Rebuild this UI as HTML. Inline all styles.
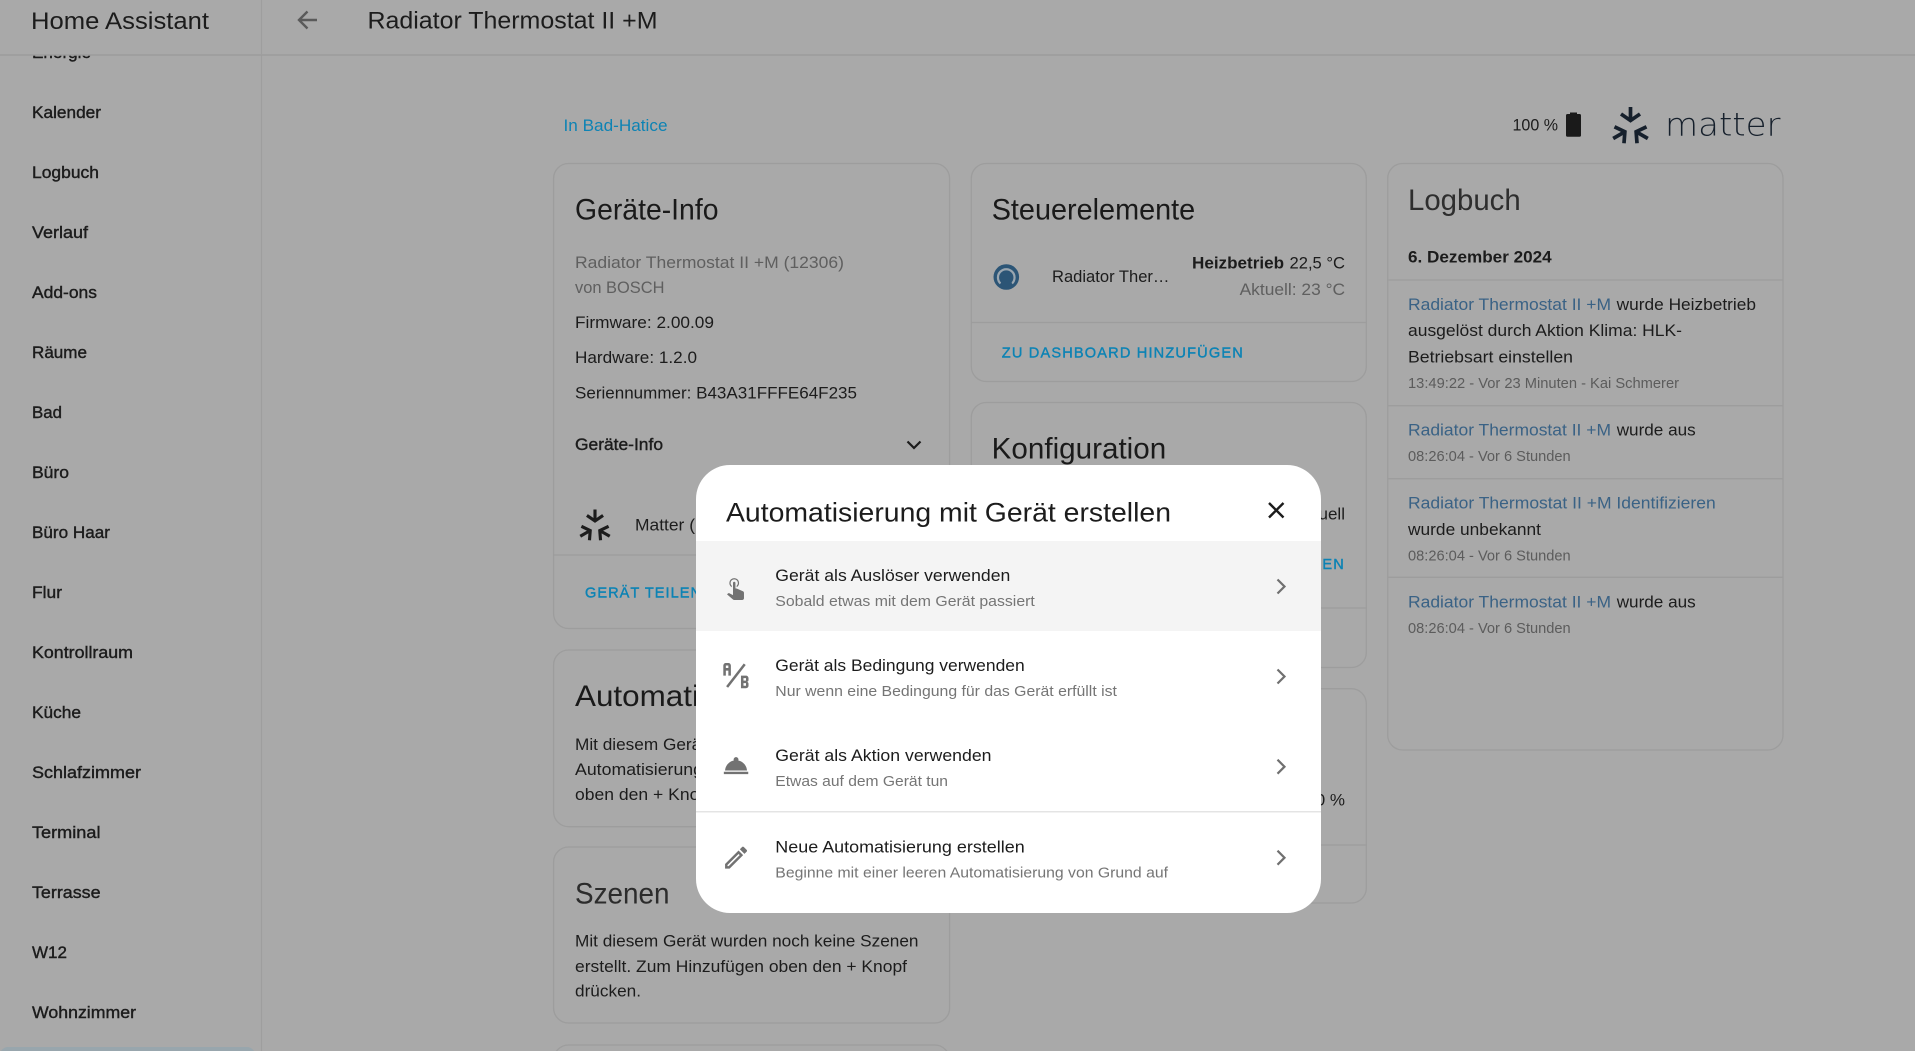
<!DOCTYPE html>
<html lang="de">
<head>
<meta charset="utf-8">
<title>Radiator Thermostat II +M</title>
<style>
html,body{margin:0;padding:0;width:1915px;height:1051px;overflow:hidden;background:#a9a9a9}
svg{display:block;position:absolute;left:0;top:0}
text{font-family:"Liberation Sans",sans-serif;font-size:17px;fill:#1c1c1c}
.nav{stroke:#1c1c1c;stroke-width:.4px}
.h{font-size:29.3px;fill:#1a1a1a}
.g{fill:#5f5f5f}
.l{fill:#3a6285}
.t{font-size:14.7px;fill:#5c5c5c}
.b{fill:#0d83b4;font-size:14.6px;stroke:#0d83b4;stroke-width:.4px}
.s{font-size:14.7px;fill:#757575}
.card{fill:#a9a9a9;stroke:#9d9d9d;stroke-width:1.3}
.div{stroke:#9d9d9d;stroke-width:1.3}
</style>
</head>
<body>
<svg width="1915" height="1051" viewBox="0 0 1915 1051" xmlns="http://www.w3.org/2000/svg">
<defs>
<g id="mt" fill="none" stroke-width="3.700">
<g id="arm"><path d="M0-20V-8"/><path d="M-9.500-13L0-6.500L9.500-13"/></g>
<use href="#arm" transform="translate(0 1.500) rotate(120)"/>
<use href="#arm" transform="translate(0 1.500) rotate(240)"/>
</g>
</defs>
<rect width="1915" height="1051" fill="#a9a9a9"/>

<!-- Sidebar -->
<text class="nav" x="32" y="58" textLength="59" lengthAdjust="spacingAndGlyphs">Energie</text>
<text class="nav" x="32" y="118" textLength="69" lengthAdjust="spacingAndGlyphs">Kalender</text>
<text class="nav" x="32" y="178" textLength="67" lengthAdjust="spacingAndGlyphs">Logbuch</text>
<text class="nav" x="32" y="238" textLength="56" lengthAdjust="spacingAndGlyphs">Verlauf</text>
<text class="nav" x="32" y="298" textLength="65" lengthAdjust="spacingAndGlyphs">Add-ons</text>
<text class="nav" x="32" y="358" textLength="55" lengthAdjust="spacingAndGlyphs">Räume</text>
<text class="nav" x="32" y="418" textLength="30" lengthAdjust="spacingAndGlyphs">Bad</text>
<text class="nav" x="32" y="478" textLength="37" lengthAdjust="spacingAndGlyphs">Büro</text>
<text class="nav" x="32" y="538" textLength="78" lengthAdjust="spacingAndGlyphs">Büro Haar</text>
<text class="nav" x="32" y="598" textLength="30" lengthAdjust="spacingAndGlyphs">Flur</text>
<text class="nav" x="32" y="658" textLength="101" lengthAdjust="spacingAndGlyphs">Kontrollraum</text>
<text class="nav" x="32" y="718" textLength="49" lengthAdjust="spacingAndGlyphs">Küche</text>
<text class="nav" x="32" y="778" textLength="109" lengthAdjust="spacingAndGlyphs">Schlafzimmer</text>
<text class="nav" x="32" y="838" textLength="68.500" lengthAdjust="spacingAndGlyphs">Terminal</text>
<text class="nav" x="32" y="898" textLength="68.500" lengthAdjust="spacingAndGlyphs">Terrasse</text>
<text class="nav" x="32" y="958" textLength="35" lengthAdjust="spacingAndGlyphs">W12</text>
<text class="nav" x="32" y="1018" textLength="104" lengthAdjust="spacingAndGlyphs">Wohnzimmer</text>
<rect x="0" y="1047" width="255" height="20" rx="8" fill="#98a6ad"/>
<line x1="261.500" y1="0" x2="261.500" y2="1051" stroke="#9e9e9e" stroke-width="1.2"/>

<!-- Header -->
<rect width="1915" height="55" fill="#a9a9a9"/>
<line x1="0" y1="55" x2="1915" y2="55" stroke="#9c9c9c" stroke-width="1.4"/>
<line x1="261.500" y1="0" x2="261.500" y2="55" stroke="#9e9e9e" stroke-width="1.2"/>
<text x="31" y="29" style="font-size:24.4px" textLength="178" lengthAdjust="spacingAndGlyphs">Home Assistant</text>
<path d="M317 20H299M307.500 11.500L299 20L307.500 28.500" fill="none" stroke="#5a5a5a" stroke-width="2.400"/>
<text x="367.500" y="28.500" style="font-size:24.4px" textLength="290" lengthAdjust="spacingAndGlyphs">Radiator Thermostat II +M</text>

<!-- Top row -->
<text x="563.500" y="131" style="fill:#0d83b4" textLength="104" lengthAdjust="spacingAndGlyphs">In Bad-Hatice</text>
<text x="1512.500" y="130.700" textLength="45.500" lengthAdjust="spacingAndGlyphs">100 %</text>
<path d="M1570 114V112.500H1577V114H1579.500A1.500 1.500 0 0 1 1581 115.500V135.200A1.500 1.500 0 0 1 1579.500 136.700H1567.500A1.500 1.500 0 0 1 1566 135.200V115.500A1.500 1.500 0 0 1 1567.500 114Z" fill="#1a1a1a"/>
<use href="#mt" transform="translate(1630.500 127)" stroke="#16202c"/>
<text x="1665" y="135.700" style="font-family:'DejaVu Sans',sans-serif;font-weight:200;font-size:32px;fill:#16202c" textLength="115.500" lengthAdjust="spacingAndGlyphs">matter</text>

<!-- Column 1 -->
<rect class="card" x="553.600" y="163.500" width="396" height="465" rx="15"/>
<text class="h" x="575" y="219.300" textLength="143.500" lengthAdjust="spacingAndGlyphs">Geräte-Info</text>
<text class="g" x="575" y="268" textLength="269" lengthAdjust="spacingAndGlyphs">Radiator Thermostat II +M (12306)</text>
<text class="g" x="575" y="293" textLength="89.500" lengthAdjust="spacingAndGlyphs">von BOSCH</text>
<text x="575" y="328" textLength="139" lengthAdjust="spacingAndGlyphs">Firmware: 2.00.09</text>
<text x="575" y="363" textLength="122" lengthAdjust="spacingAndGlyphs">Hardware: 1.2.0</text>
<text x="575" y="398.500" textLength="282" lengthAdjust="spacingAndGlyphs">Seriennummer: B43A31FFFE64F235</text>
<text class="nav" x="575" y="450" textLength="88" lengthAdjust="spacingAndGlyphs">Geräte-Info</text>
<path d="M907.500 441.500L914 448L920.500 441.500" fill="none" stroke="#1c1c1c" stroke-width="2.200"/>
<use href="#mt" transform="translate(595 526.500) scale(.85)" stroke="#1c1c1c"/>
<text x="635" y="530.700" textLength="60" lengthAdjust="spacingAndGlyphs">Matter (</text>
<line class="div" x1="553.600" y1="555" x2="949.600" y2="555"/>
<text class="b" x="585" y="597.700" textLength="116" lengthAdjust="spacing">GERÄT TEILEN</text>

<rect class="card" x="553.600" y="650" width="396" height="176.700" rx="15"/>
<text class="h" x="575" y="706" textLength="124" lengthAdjust="spacingAndGlyphs">Automati</text>
<text x="575" y="750" textLength="131" lengthAdjust="spacingAndGlyphs">Mit diesem Gerät</text>
<text x="575" y="775" textLength="128" lengthAdjust="spacingAndGlyphs">Automatisierung</text>
<text x="575" y="800" textLength="139" lengthAdjust="spacingAndGlyphs">oben den + Knopf</text>

<rect class="card" x="553.600" y="847" width="396" height="176" rx="15"/>
<text class="h" x="575" y="903.500" style="fill:#2c2c2c" textLength="94.500" lengthAdjust="spacingAndGlyphs">Szenen</text>
<text x="575" y="946.700" textLength="343.500" lengthAdjust="spacingAndGlyphs">Mit diesem Gerät wurden noch keine Szenen</text>
<text x="575" y="971.800" textLength="332" lengthAdjust="spacingAndGlyphs">erstellt. Zum Hinzufügen oben den + Knopf</text>
<text x="575" y="996.700" textLength="66" lengthAdjust="spacingAndGlyphs">drücken.</text>
<rect class="card" x="553.600" y="1045" width="396" height="40" rx="15"/>

<!-- Column 2 -->
<rect class="card" x="971.300" y="163.500" width="395" height="218" rx="15"/>
<text class="h" x="991.700" y="219.300" textLength="203.500" lengthAdjust="spacingAndGlyphs">Steuerelemente</text>
<circle cx="1006.300" cy="277" r="12.800" fill="#2c5576"/>
<path d="M1000.500 283.500A8.300 8.300 0 1 1 1012 283.500" fill="none" stroke="#9aa6b0" stroke-width="2.200"/>
<path d="M1001 287.500C1000.800 280 1002.500 276 1006 274.500L1008.500 271L1010 275C1011.500 277 1012 281 1011.500 287.500Z" fill="#2c5576"/>
<text x="1052" y="282" textLength="117.500" lengthAdjust="spacingAndGlyphs">Radiator Ther…</text>
<text x="1192" y="268.700" font-weight="bold" textLength="92" lengthAdjust="spacingAndGlyphs">Heizbetrieb</text>
<text x="1289.500" y="268.700" textLength="55.500" lengthAdjust="spacingAndGlyphs">22,5 °C</text>
<text class="g" x="1239.600" y="295" textLength="105.500" lengthAdjust="spacingAndGlyphs">Aktuell: 23 °C</text>
<line class="div" x1="971.300" y1="322.500" x2="1366.300" y2="322.500"/>
<text class="b" x="1001.800" y="357.700" textLength="241" lengthAdjust="spacing">ZU DASHBOARD HINZUFÜGEN</text>

<rect class="card" x="971.300" y="402.500" width="395" height="265" rx="15"/>
<text class="h" x="991.700" y="458.300" textLength="174.500" lengthAdjust="spacingAndGlyphs">Konfiguration</text>
<text x="1345" y="519.300" text-anchor="end">manuell</text>
<text class="b" x="1345" y="569" text-anchor="end" style="letter-spacing:1.2px">KEN</text>
<line class="div" x1="971.300" y1="608" x2="1366.300" y2="608"/>

<rect class="card" x="971.300" y="688.700" width="395" height="214.300" rx="15"/>
<text x="1345" y="805.700" text-anchor="end">100 %</text>
<line class="div" x1="971.300" y1="845" x2="1366.300" y2="845"/>

<!-- Logbook -->
<rect class="card" x="1387.700" y="163.500" width="395.300" height="586.500" rx="15"/>
<text class="h" x="1408" y="210" style="fill:#2e2e2e" textLength="112.700" lengthAdjust="spacingAndGlyphs">Logbuch</text>
<text x="1408" y="262.700" font-weight="bold" textLength="143.700" lengthAdjust="spacingAndGlyphs">6. Dezember 2024</text>
<line class="div" x1="1387.700" y1="280" x2="1783" y2="280"/>
<text class="l" x="1408" y="310" textLength="203" lengthAdjust="spacingAndGlyphs">Radiator Thermostat II +M</text>
<text x="1616.700" y="310" textLength="139.300" lengthAdjust="spacingAndGlyphs">wurde Heizbetrieb</text>
<text x="1408" y="336" textLength="274" lengthAdjust="spacingAndGlyphs">ausgelöst durch Aktion Klima: HLK-</text>
<text x="1408" y="362.500" textLength="165" lengthAdjust="spacingAndGlyphs">Betriebsart einstellen</text>
<text class="t" x="1408" y="388" textLength="271" lengthAdjust="spacingAndGlyphs">13:49:22 - Vor 23 Minuten - Kai Schmerer</text>
<line class="div" x1="1387.700" y1="405.700" x2="1783" y2="405.700"/>
<text class="l" x="1408" y="435.700" textLength="203" lengthAdjust="spacingAndGlyphs">Radiator Thermostat II +M</text>
<text x="1616.700" y="435.700" textLength="79" lengthAdjust="spacingAndGlyphs">wurde aus</text>
<text class="t" x="1408" y="461" textLength="162.700" lengthAdjust="spacingAndGlyphs">08:26:04 - Vor 6 Stunden</text>
<line class="div" x1="1387.700" y1="478.700" x2="1783" y2="478.700"/>
<text class="l" x="1408" y="508.500" textLength="307.700" lengthAdjust="spacingAndGlyphs">Radiator Thermostat II +M Identifizieren</text>
<text x="1408" y="535" textLength="133" lengthAdjust="spacingAndGlyphs">wurde unbekannt</text>
<text class="t" x="1408" y="560.700" textLength="162.700" lengthAdjust="spacingAndGlyphs">08:26:04 - Vor 6 Stunden</text>
<line class="div" x1="1387.700" y1="577.300" x2="1783" y2="577.300"/>
<text class="l" x="1408" y="607.300" textLength="203" lengthAdjust="spacingAndGlyphs">Radiator Thermostat II +M</text>
<text x="1616.700" y="607.300" textLength="79" lengthAdjust="spacingAndGlyphs">wurde aus</text>
<text class="t" x="1408" y="633" textLength="162.700" lengthAdjust="spacingAndGlyphs">08:26:04 - Vor 6 Stunden</text>

<!-- Dialog -->
<clipPath id="mc"><rect x="696" y="465" width="625" height="448" rx="34"/></clipPath>
<rect x="696" y="465" width="625" height="448" rx="34" fill="#fff"/>
<g clip-path="url(#mc)">
<rect x="696" y="541" width="625" height="90" fill="#f4f4f4"/>
<rect x="696" y="811" width="625" height="1.500" fill="#e4e4e4"/>
</g>
<text x="726" y="521.700" style="font-size:26.8px" textLength="445" lengthAdjust="spacingAndGlyphs">Automatisierung mit Gerät erstellen</text>
<path d="M1269 503L1283.500 517.500M1283.500 503L1269 517.500" stroke="#1c1c1c" stroke-width="2.400" fill="none"/>

<path transform="translate(720.800 572) scale(1.22)" fill="#727272" d="M10,9A1,1 0 0,1 11,8A1,1 0 0,1 12,9V13.47L13.21,13.6L18.15,15.79C18.68,16.03 19,16.56 19,17.14V21.5C18.97,22.32 18.32,22.97 17.5,23H11C10.62,23 10.26,22.85 10,22.57L5.1,18.37L5.84,17.6C6.03,17.39 6.3,17.28 6.58,17.28H6.8L10,19V9M11,5A4,4 0 0,1 15,9C15,10.5 14.2,11.77 13,12.46V11.24C13.61,10.69 14,9.89 14,9A3,3 0 0,0 11,6A3,3 0 0,0 8,9C8,9.89 8.39,10.69 9,11.24V12.46C7.8,11.77 7,10.5 7,9A4,4 0 0,1 11,5Z"/>
<text x="775.300" y="581" textLength="235" lengthAdjust="spacingAndGlyphs">Gerät als Auslöser verwenden</text>
<text class="s" x="775.300" y="606" textLength="259.500" lengthAdjust="spacingAndGlyphs">Sobald etwas mit dem Gerät passiert</text>
<path d="M1277.500 579.500L1284.500 586.500L1277.500 593.500" fill="none" stroke="#707070" stroke-width="2.200"/>

<path transform="translate(720.800 660.500) scale(1.26)" fill="#727272" d="M4 2A2 2 0 0 0 2 4V12H4V8H6V12H8V4A2 2 0 0 0 6 2H4M4 4H6V6H4M22 15.5V14A2 2 0 0 0 20 12H16V22H20A2 2 0 0 0 22 20V18.5A1.54 1.54 0 0 0 20.5 17A1.54 1.54 0 0 0 22 15.5M20 20H18V18H20V20M20 16H18V14H20M5.79 21.61L4.21 20.39L18.21 2.39L19.79 3.61Z"/>
<text x="775.300" y="671" textLength="249.400" lengthAdjust="spacingAndGlyphs">Gerät als Bedingung verwenden</text>
<text class="s" x="775.300" y="696" textLength="341.600" lengthAdjust="spacingAndGlyphs">Nur wenn eine Bedingung für das Gerät erfüllt ist</text>
<path d="M1277.500 669.500L1284.500 676.500L1277.500 683.500" fill="none" stroke="#707070" stroke-width="2.200"/>

<path transform="translate(721.400 751) scale(1.22)" fill="#727272" d="M2,17H22V19H2V17M13.84,7.79C13.94,7.55 14,7.28 14,7A2,2 0 0,0 12,5A2,2 0 0,0 10,7C10,7.28 10.06,7.55 10.16,7.79C6.25,8.6 3.27,11.93 3,16H21C20.73,11.93 17.75,8.6 13.84,7.79Z"/>
<text x="775.300" y="761" textLength="216.200" lengthAdjust="spacingAndGlyphs">Gerät als Aktion verwenden</text>
<text class="s" x="775.300" y="786" textLength="172.700" lengthAdjust="spacingAndGlyphs">Etwas auf dem Gerät tun</text>
<path d="M1277.500 759.700L1284.500 766.700L1277.500 773.700" fill="none" stroke="#707070" stroke-width="2.200"/>

<path transform="translate(721.400 843) scale(1.22)" fill="#727272" d="M14.06,9L15,9.94L5.92,19H5V18.08L14.06,9M17.66,3C17.41,3 17.15,3.1 16.96,3.29L15.13,5.12L18.88,8.87L20.71,7.04C21.1,6.65 21.1,6 20.71,5.63L18.37,3.29C18.17,3.09 17.92,3 17.66,3M14.06,6.19L3,17.25V21H6.75L17.81,9.94L14.06,6.19Z"/>
<text x="775.300" y="852.300" textLength="249.400" lengthAdjust="spacingAndGlyphs">Neue Automatisierung erstellen</text>
<text class="s" x="775.300" y="877.300" textLength="392.700" lengthAdjust="spacingAndGlyphs">Beginne mit einer leeren Automatisierung von Grund auf</text>
<path d="M1277.500 850.700L1284.500 857.700L1277.500 864.700" fill="none" stroke="#707070" stroke-width="2.200"/>
</svg>
</body>
</html>
